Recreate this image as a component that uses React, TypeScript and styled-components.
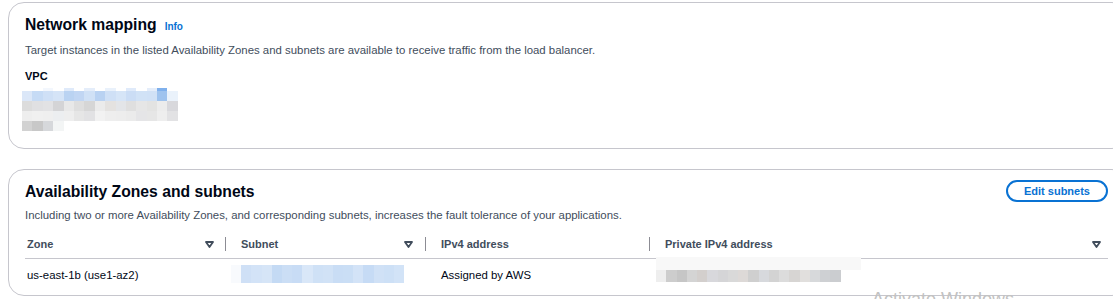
import React from 'react';
import styled, { createGlobalStyle } from 'styled-components';

const GlobalStyle = createGlobalStyle`
    html, body {
        margin: 0;
        padding: 0;
        background: #ffffff;
        overflow: hidden;
    }
    body {
        font-family: 'Liberation Sans', Arial, sans-serif;
        color: #000716;
    }
`;

const Page = styled.div`
    position: relative;
    width: 1128px;
    height: 299px;
    padding: 2px 0 0 8px;
    box-sizing: border-box;
    display: flex;
    flex-direction: column;
    gap: 20px;
`;

const Panel = styled.section<{ $padBottom: number }>`
    width: 1120px;
    box-sizing: border-box;
    border: 1px solid #c6c6cd;
    border-radius: 16px;
    padding: 11px 19px ${(p) => p.$padBottom}px 16px;
    background: #ffffff;
`;

const HeaderRow = styled.div`
    display: flex;
    justify-content: space-between;
    align-items: flex-start;
`;

const TitleLine = styled.div`
    display: flex;
    align-items: baseline;
    gap: 8px;
    line-height: 22px;
`;

const Title = styled.h2`
    margin: 0;
    font-size: 15.7px;
    font-weight: 700;
    line-height: 22px;
    color: #000716;
`;

const InfoLink = styled.a`
    font-size: 10px;
    font-weight: 700;
    color: #0972d3;
    text-decoration: none;
`;

const Description = styled.p`
    margin: 4px 0 0;
    font-size: 11.4px;
    line-height: 16px;
    color: #414d5c;
`;

const Label = styled.div`
    margin-top: 10px;
    font-size: 11px;
    font-weight: 700;
    line-height: 16px;
    color: #000716;
`;

const EditButton = styled.button`
    margin-top: -1px;
    height: 22px;
    padding: 0 16px;
    border: 2px solid #0972d3;
    border-radius: 20px;
    background: #ffffff;
    color: #0972d3;
    font-family: inherit;
    font-size: 11px;
    font-weight: 700;
    line-height: 16px;
`;

/* blurred, pixelated values copied from the screenshot */
const MosaicBox = styled.div<{ $offsetX: number; $offsetY: number }>`
    display: flex;
    flex-direction: column;
    margin-left: ${(p) => p.$offsetX}px;
    margin-top: ${(p) => p.$offsetY}px;
`;

const MosaicRow = styled.div<{ $h: number }>`
    display: flex;
    height: ${(p) => p.$h}px;
`;

const MosaicCell = styled.span<{ $c: string; $w: number }>`
    width: ${(p) => p.$w}px;
    height: 100%;
    background: ${(p) => p.$c};
`;

type MosaicProps = {
    rows: { h: number; cells: string[] }[];
    cellW: number;
    offsetX?: number;
    offsetY?: number;
};

const Mosaic = ({ rows, cellW, offsetX = 0, offsetY = 0 }: MosaicProps) => (
    <MosaicBox $offsetX={offsetX} $offsetY={offsetY}>
        {rows.map((row, i) => (
            <MosaicRow key={i} $h={row.h}>
                {row.cells.map((c, j) => (
                    <MosaicCell key={j} $c={c} $w={cellW} />
                ))}
            </MosaicRow>
        ))}
    </MosaicBox>
);

const vpcRows = [
    {
        h: 3,
        cells: ['#ffffff', '#ffffff', '#f3f7fd', '#ffffff', '#dfeafa', '#ffffff', '#e4edfa', '#ffffff', '#e9f1fb', '#ffffff', '#dfeafa', '#ffffff', '#e4edfa', '#7fb0ec', '#ffffff'],
    },
    {
        h: 10,
        cells: ['#dbe7f8', '#c6dbf5', '#cfe0f6', '#d5e4f7', '#bad3f2', '#c1d6f3', '#d0e1f6', '#b9d2f2', '#cfe0f6', '#d6e5f7', '#cbddf5', '#d1e2f6', '#d0e1f6', '#9fc3ee', '#eaf2fb'],
    },
    {
        h: 10,
        cells: ['#dcdcdc', '#e0e0e2', '#e2e2e4', '#d4d4d6', '#e8e8e8', '#dedede', '#d6d6d6', '#ebebeb', '#e4e2e0', '#e3e5e8', '#dfdfdf', '#e6e6e6', '#e3e3e2', '#ececec', '#d8d8dc'],
    },
    {
        h: 10,
        cells: ['#eeeeee', '#f0f0f0', '#efefef', '#eceef0', '#eeeeee', '#e6e6e6', '#e2e2e4', '#f2f2f2', '#eeeeee', '#ededed', '#ebebeb', '#e5e5e7', '#e6e6e6', '#eeeeee', '#e2e2e4'],
    },
    {
        h: 10,
        cells: ['#d2d2d2', '#c8c8c8', '#d6d8db', '#f3f5f5'],
    },
];

const subnetRows = [
    {
        h: 18,
        cells: ['#f8fafd', '#cfe0f6', '#d3e3f7', '#d6e5f7', '#c4daf4', '#cbdef5', '#c8dcf5', '#d9e7f8', '#cfe1f6', '#d1e2f6', '#c9ddf5', '#cadef5', '#d3e3f7', '#c6dbf5', '#d0e1f6', '#cde0f6', '#d2e3f7'],
    },
];

const privateRows = [
    {
        h: 13,
        cells: Array(20).fill('#f8f8f8'),
    },
    {
        h: 12,
        cells: ['#eeeeee', '#cdcdcd', '#c6c6c6', '#d4d4d4', '#d3cfcd', '#d8d8dc', '#d5d5d7', '#d9d9d9', '#ddd9d7', '#cfcfcf', '#d7d9dd', '#d3d3d3', '#dcdcdc', '#d7d5d3', '#e1dfdd', '#d7d9db', '#ced0d3', '#cbcdd0'],
    },
];

const Table = styled.div`
    margin-top: 5px;
    display: grid;
    grid-template-columns: 200px 200px 224px 1fr;
`;

const HeadCell = styled.div<{ $first?: boolean; $padRight: number }>`
    position: relative;
    display: flex;
    align-items: center;
    justify-content: space-between;
    padding: 8px ${(p) => p.$padRight}px 6px ${(p) => (p.$first ? 2 : 16)}px;
    border-bottom: 1px solid #c6c6cd;
    font-size: 11px;
    font-weight: 700;
    line-height: 16px;
    color: #414d5c;

    &::before {
        content: '';
        display: ${(p) => (p.$first ? 'none' : 'block')};
        position: absolute;
        left: 0;
        top: 9px;
        width: 1px;
        height: 14px;
        background: #8c8c94;
    }
`;

const BodyCell = styled.div<{ $first?: boolean }>`
    position: relative;
    display: flex;
    align-items: flex-start;
    padding: 8px 0 12px ${(p) => (p.$first ? 2 : 16)}px;
    font-size: 11.4px;
    line-height: 16px;
    color: #000716;
`;

const OverlayMosaic = styled.div`
    position: absolute;
    left: 7px;
    top: -2px;
`;

const SortIcon = () => (
    <svg width="9" height="7" viewBox="0 0 9 7">
        <path d="M1 1 H8 L4.5 6 Z" fill="#ffffff" stroke="#414d5c" strokeWidth="1.8" strokeLinejoin="round" />
    </svg>
);

const Watermark = styled.div`
    position: absolute;
    left: 872px;
    top: 288px;
    font-size: 18px;
    line-height: 22px;
    color: #c2c2c2;
    white-space: nowrap;
    pointer-events: none;
`;

const columns = [
    { label: 'Zone', sort: true, pad: 11 },
    { label: 'Subnet', sort: true, pad: 12 },
    { label: 'IPv4 address', sort: false, pad: 11 },
    { label: 'Private IPv4 address', sort: true, pad: 7 },
];

export default function App() {
    return (
        <>
            <GlobalStyle />
            <Page>
                <Panel $padBottom={17}>
                    <TitleLine>
                        <Title>Network mapping</Title>
                        <InfoLink href="#">Info</InfoLink>
                    </TitleLine>
                    <Description>
                        Target instances in the listed Availability Zones and subnets are available to receive traffic from the load balancer.
                    </Description>
                    <Label>VPC</Label>
                    <Mosaic rows={vpcRows} cellW={10.4} offsetX={-3} offsetY={4} />
                </Panel>

                <Panel $padBottom={0}>
                    <HeaderRow>
                        <Title>Availability Zones and subnets</Title>
                        <EditButton>Edit subnets</EditButton>
                    </HeaderRow>
                    <Description>
                        Including two or more Availability Zones, and corresponding subnets, increases the fault tolerance of your applications.
                    </Description>
                    <Table>
                        {columns.map((col, i) => (
                            <HeadCell key={col.label} $first={i === 0} $padRight={col.pad}>
                                <span>{col.label}</span>
                                {col.sort && <SortIcon />}
                            </HeadCell>
                        ))}
                        <BodyCell $first>us-east-1b (use1-az2)</BodyCell>
                        <BodyCell>
                            <Mosaic rows={subnetRows} cellW={10.2} offsetX={-10} offsetY={-2} />
                        </BodyCell>
                        <BodyCell>Assigned by AWS</BodyCell>
                        <BodyCell>
                            <OverlayMosaic>
                                <Mosaic rows={privateRows} cellW={10.25} />
                            </OverlayMosaic>
                        </BodyCell>
                    </Table>
                </Panel>
                <Watermark>Activate Windows</Watermark>
            </Page>
        </>
    );
}
